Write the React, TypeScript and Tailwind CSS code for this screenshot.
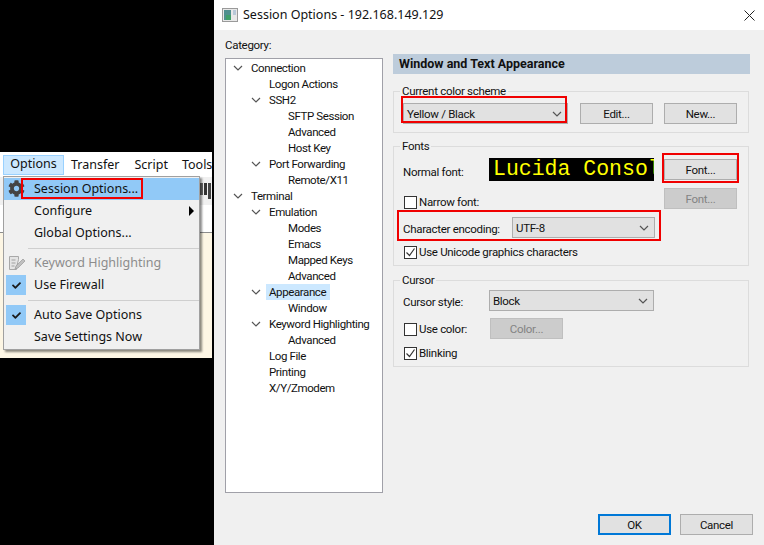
import React from 'react';
import { FaCog, FaCheck } from 'react-icons/fa';

const notoFont = "font-['Noto_Sans','Liberation_Sans',sans-serif]";
const bodyFont = "font-['Roboto','Liberation_Sans',sans-serif]";

const tree: { label: string; level: number; open?: boolean; selected?: boolean }[] = [
  { label: 'Connection', level: 0, open: true },
  { label: 'Logon Actions', level: 1 },
  { label: 'SSH2', level: 1, open: true },
  { label: 'SFTP Session', level: 2 },
  { label: 'Advanced', level: 2 },
  { label: 'Host Key', level: 2 },
  { label: 'Port Forwarding', level: 1, open: true },
  { label: 'Remote/X11', level: 2 },
  { label: 'Terminal', level: 0, open: true },
  { label: 'Emulation', level: 1, open: true },
  { label: 'Modes', level: 2 },
  { label: 'Emacs', level: 2 },
  { label: 'Mapped Keys', level: 2 },
  { label: 'Advanced', level: 2 },
  { label: 'Appearance', level: 1, open: true, selected: true },
  { label: 'Window', level: 2 },
  { label: 'Keyword Highlighting', level: 1, open: true },
  { label: 'Advanced', level: 2 },
  { label: 'Log File', level: 1 },
  { label: 'Printing', level: 1 },
  { label: 'X/Y/Zmodem', level: 1 },
];

const Chevron = ({ className }: { className?: string }) => (
  <svg width="10" height="6" viewBox="0 0 10 6" className={className}>
    <path d="M1 1l4 4 4-4" fill="none" stroke="currentColor" strokeWidth="1.2" />
  </svg>
);

const TreeRow = ({ label, level, open, selected }: (typeof tree)[number]) => {
  const indent = level === 0 ? 'pl-[7px]' : level === 1 ? 'pl-[25px]' : 'pl-[62px]';
  return (
    <div className={`flex items-center h-4 ${indent}`}>
      {level < 2 && (
        <span className="w-[10px] mr-[8px] flex justify-center text-[#555]">
          {open && <Chevron />}
        </span>
      )}
      <span className={`leading-4 tracking-[-0.4px] ${selected ? 'bg-[#cce8ff] -ml-[3px] pl-[3px] pr-[4px]' : ''}`}>{label}</span>
    </div>
  );
};

const Button = ({ label, disabled, primary, className = '' }: { label: string; disabled?: boolean; primary?: boolean; className?: string }) => (
  <div
    className={`w-[73px] h-[21px] flex items-center justify-center ${
      primary
        ? 'border-2 border-[#0078d7] bg-[#e1e1e1]'
        : disabled
        ? 'border border-[#bfbfbf] bg-[#cccccc] text-[#838383]'
        : 'border border-[#adadad] bg-[#e1e1e1]'
    } ${className}`}
  >
    {label}
  </div>
);

const Combo = ({ value, className = '' }: { value: string; className?: string }) => (
  <div className={`h-[21px] flex items-center justify-between pl-[3px] pr-[5px] border border-[#adadad] bg-[#e1e1e1] ${className}`}>
    <span>{value}</span>
    <Chevron className="text-[#555]" />
  </div>
);

const Check = ({ checked, label }: { checked?: boolean; label: string }) => (
  <div className="flex items-center ml-px">
    <span className="w-[13px] h-[13px] border border-[#333] bg-white flex items-center justify-center">
      {checked && (
        <svg width="11" height="11" viewBox="0 0 11 11">
          <path d="M1.5 5.5l3 3 5-7" fill="none" stroke="#333" strokeWidth="1.2" />
        </svg>
      )}
    </span>
    <span className="ml-[2px] -mt-px">{label}</span>
  </div>
);

const Group = ({ title, className = '', children }: { title: string; className?: string; children: React.ReactNode }) => (
  <fieldset className={`border border-[#dcdcdc] w-[356px] pl-[9px] ${className}`}>
    <legend className="-ml-[3px] px-[2px] h-4 leading-4">{title}</legend>
    {children}
  </fieldset>
);

const MenuItem = ({ label, disabled, arrow, hot, checked, icon }: { label: string; disabled?: boolean; arrow?: boolean; hot?: boolean; checked?: boolean; icon?: React.ReactNode }) => (
  <div className={`relative h-[22px] flex items-center pl-[30px] ${hot ? 'bg-[#91c9f7]' : ''} ${disabled ? 'text-[#8c8c8c]' : ''}`}>
    {checked && (
      <span className="absolute left-[2px] top-[1px] w-5 h-5 bg-[#91c9f7] flex items-center justify-center">
        <FaCheck className="text-[9px] text-[#1a1a1a]" />
      </span>
    )}
    {icon}
    <span>{label}</span>
    {arrow && <span className="absolute right-[5px] top-[6px] w-0 h-0 border-y-[5px] border-y-transparent border-l-[5px] border-l-black" />}
  </div>
);

const LeftPanel = () => (
  <div className={`relative w-[214px] shrink-0 bg-black pt-[152px] text-[12.5px] text-[#111] ${notoFont}`}>
    <div className="w-[212px] h-[206px] flex flex-col bg-[#fdf6e4] overflow-hidden">
      {/* menu bar */}
      <div className="h-[25px] bg-white flex items-center pl-[3px] whitespace-nowrap">
        <span className="shrink-0 h-[20px] w-[61px] flex items-center justify-center bg-[#cce8ff] border border-[#99d1ff]">Options</span>
        <span className="ml-[7px] shrink-0 pt-[2px]">Transfer</span>
        <span className="ml-[15px] shrink-0 pt-[2px]">Script</span>
        <span className="ml-[14px] shrink-0 pt-[2px]">Tools</span>
      </div>
      {/* toolbar behind the menu */}
      <div className="h-[28px] bg-[#f0f0f0] flex items-start justify-end gap-[1px] pr-px pt-[6px]">
        <span className="w-[3px] h-[12px] bg-[#666]" />
        <span className="w-[3px] h-[12px] bg-[#333]" />
        <span className="w-[3px] h-[16px] bg-[#444]" />
      </div>
      <div className="h-[28px] bg-white border-b border-[#8c8c8c]" />
      <div className="flex-1" />
    </div>

    {/* dropdown */}
    <div className="absolute left-[3px] top-[176px] w-[197px] h-[174px] bg-[#f0f0f0] border border-[#a0a0a0] shadow-[2px_2px_2px_rgba(0,0,0,0.45)] pt-px">
      <MenuItem label="Session Options..." hot icon={<FaCog className="absolute left-[4px] top-[2px] text-[17px] text-[#444]" />} />
      <MenuItem label="Configure" arrow />
      <MenuItem label="Global Options..." />
      <div className="h-[8px] flex items-center pl-[24px]"><div className="h-px w-full bg-[#cfcfcf]" /></div>
      <MenuItem
        label="Keyword Highlighting"
        disabled
        icon={
          <svg width="18" height="16" viewBox="0 0 18 16" className="absolute left-[4px] top-[3px]">
            <path d="M1.5 1.5h9v3l-2 8v2h-7z" fill="#e4e4e4" stroke="#a8a8a8" />
            <path d="M3.5 5h4M3.5 8h4M3.5 11h3" stroke="#a0a0a0" />
            <path d="M8 11l7-7 2 2-7 7-3 1z" fill="#c0c0c0" stroke="#9a9a9a" strokeWidth="0.7" />
          </svg>
        }
      />
      <MenuItem label="Use Firewall" checked />
      <div className="h-[8px] flex items-center pl-[24px]"><div className="h-px w-full bg-[#cfcfcf]" /></div>
      <MenuItem label="Auto Save Options" checked />
      <MenuItem label="Save Settings Now" />
    </div>

    {/* annotation */}
    <div className="absolute left-[21px] top-[178px] w-[122px] h-[21px] border-2 border-[#f00000]" />
  </div>
);

const Dialog = () => (
  <div className={`relative flex-1 h-[545px] flex flex-col bg-[#f0f0f0] text-[11.5px] tracking-[-0.3px] leading-4 text-[#111] ${bodyFont}`}>
    {/* title bar */}
    <div className={`h-[30px] bg-white flex items-center pl-[8px] pr-[9px] text-[12.5px] tracking-normal ${notoFont}`}>
      <svg width="16" height="14" viewBox="0 0 16 14" className="mr-[5px]">
        <rect x="0.5" y="0.5" width="15" height="13" fill="#e8e8e8" stroke="#9a9a9a" />
        <rect x="2" y="2" width="7" height="10" fill="#4f8f8f" />
        <rect x="4" y="7" width="5" height="5" fill="#3f9f6a" />
        <rect x="11" y="2" width="3" height="5" fill="#b8c8d8" />
      </svg>
      <span>Session Options - 192.168.149.129</span>
      <svg width="11" height="11" viewBox="0 0 11 11" className="ml-auto">
        <path d="M0.5 0.5l10 10M10.5 0.5l-10 10" stroke="#222" strokeWidth="1" />
      </svg>
    </div>

    <div className="flex-1 flex">
      {/* category tree */}
      <div className="w-[179px] pl-[11px] pt-[7px]">
        <div className="h-4 leading-4">Category:</div>
        <div className="mt-[5px] w-[158px] h-[435px] bg-white border border-[#a0a0a8] pt-[1px] whitespace-nowrap">
          {tree.map((row, i) => (
            <TreeRow key={i} {...row} />
          ))}
        </div>
      </div>

      {/* settings */}
      <div className="pt-[24px]">
        <div className="w-[357px] h-[20px] bg-[#bdccdb] pl-[6px] flex items-center font-bold text-[12.5px] tracking-normal">Window and Text Appearance</div>

        <Group title="Current color scheme" className="mt-[9px] h-[50px]">
          <div className="flex items-center mt-[4px]">
            <Combo value="Yellow / Black" className="w-[165px]" />
            <Button label="Edit..." className="ml-[12px]" />
            <Button label="New..." className="ml-[11px]" />
          </div>
        </Group>

        <Group title="Fonts" className="mt-[5px] h-[128px]">
          <div className="flex items-center mt-[4px] h-[23px]">
            <span className="w-[86px] pt-[5px]">Normal font:</span>
            <div className="w-[165px] h-[23px] bg-black text-[#ffff00] font-['Liberation_Mono',monospace] text-[21.5px] tracking-normal leading-[23px] pl-[4px] overflow-hidden whitespace-nowrap">
              Lucida Console
            </div>
            <Button label="Font..." className="ml-[10px]" />
          </div>
          <div className="flex items-center justify-between mt-[7px] h-[21px] w-[334px]">
            <div className="pt-[7px]"><Check label="Narrow font:" /></div>
            <Button label="Font..." disabled />
          </div>
          <div className="flex items-center mt-[8px] h-[21px]">
            <span className="w-[109px] pt-[2px]">Character encoding:</span>
            <Combo value="UTF-8" className="w-[143px]" />
          </div>
          <div className="mt-[7px]">
            <Check checked label="Use Unicode graphics characters" />
          </div>
        </Group>

        <Group title="Cursor" className="mt-[6px] h-[95px]">
          <div className="flex items-center mt-[2px] h-[21px]">
            <span className="w-[86px] pt-[2px]">Cursor style:</span>
            <Combo value="Block" className="w-[165px]" />
          </div>
          <div className="flex items-center mt-[7px] h-[21px]">
            <span className="w-[87px] pt-[2px]"><Check label="Use color:" /></span>
            <Button label="Color..." disabled />
          </div>
          <div className="mt-[7px]">
            <Check checked label="Blinking" />
          </div>
        </Group>
      </div>
    </div>

    {/* footer */}
    <div className="flex justify-end gap-[9px] pr-[11px] pb-[10px]">
      <Button label="OK" primary />
      <Button label="Cancel" />
    </div>

    {/* annotations */}
    <div className="absolute left-[187px] top-[96px] w-[166px] h-[27px] border-2 border-[#f00000]" />
    <div className="absolute left-[448px] top-[153px] w-[77px] h-[30px] border-2 border-[#f00000]" />
    <div className="absolute left-[183px] top-[210px] w-[264px] h-[31px] border-2 border-[#f00000]" />
  </div>
);

export default function App() {
  return (
    <div className="flex w-[764px] h-[545px] overflow-hidden bg-black">
      <LeftPanel />
      <Dialog />
    </div>
  );
}
